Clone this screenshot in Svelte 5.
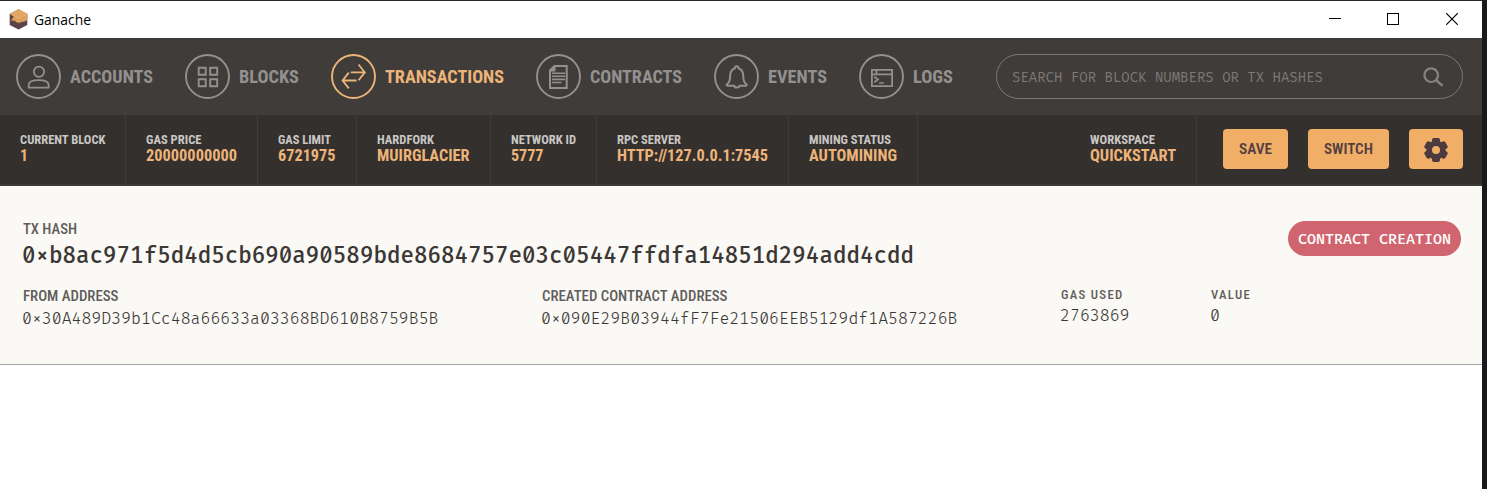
<script>
  const nav = [
    { name: 'ACCOUNTS', icon: 'user', w: 83 },
    { name: 'BLOCKS', icon: 'blocks', w: 60 },
    { name: 'TRANSACTIONS', icon: 'arrows', w: 119, active: true },
    { name: 'CONTRACTS', icon: 'doc', w: 92 },
    { name: 'EVENTS', icon: 'bell', w: 59 },
    { name: 'LOGS', icon: 'terminal', w: 40 }
  ];
  const stats = [
    { label: 'CURRENT BLOCK', lw: 85.5, value: '1', vw: 8, cell: 126 },
    { label: 'GAS PRICE', lw: 55.5, value: '20000000000', vw: 91, cell: 132 },
    { label: 'GAS LIMIT', lw: 53, value: '6721975', vw: 57.5, cell: 99 },
    { label: 'HARDFORK', lw: 57, value: 'MUIRGLACIER', vw: 92.5, cell: 134 },
    { label: 'NETWORK ID', lw: 65, value: '5777', vw: 32.5, cell: 106 },
    { label: 'RPC SERVER', lw: 64, value: 'HTTP://127.0.0.1:7545', vw: 151, cell: 192 },
    { label: 'MINING STATUS', lw: 82, value: 'AUTOMINING', vw: 88, cell: 129 }
  ];
</script>

{#snippet line(text, width, size, height, base, cls)}
  <svg class="line {cls}" {width} {height} font-size={size}>
    <text x="0" y={base} textLength={width} lengthAdjust="spacingAndGlyphs">{text}</text>
  </svg>
{/snippet}

{#snippet stat(s)}
  <div class="stat" style="width:{s.cell}px">
    {@render line(s.label, s.lw, 13, 14, 11, 'cond bold label')}
    {@render line(s.value, s.vw, 16.4, 18, 14, 'cond bold')}
  </div>
{/snippet}

<div class="screen">
  <div class="window">
    <header class="titlebar">
      <svg class="logo" width="19" height="21" viewBox="0 0 19 21">
        <path d="M9.5 0.3 18.3 5v11L9.5 20.5 .7 16V5z" fill="#5c4349" />
        <path d="M9.5 0.3 18.3 5v7.2l-2.1-.6-.9 1.4-1.6-.6-1.3 1.1-1.3-.5-1.3 1.4-1.3-1.3-1.4.4-1-2.1-1.3.8-1-.9-2.1.6z" fill="#dd9f5b" />
        <path d="M9.5 0.3 18.3 5 9.5 9.4 .7 5z" fill="#e3a762" />
        <path d="M2 5.5 9.5 9.4 17 5.5" fill="none" stroke="#ebbc83" stroke-width=".6" />
      </svg>
      {@render line('Ganache', 57, 15, 20, 15, 'title')}
      <div class="controls">
        <svg width="12" height="14" viewBox="0 0 12 14" fill="none" stroke="#000" shape-rendering="crispEdges">
          <path d="M0 6.5h12" />
        </svg>
        <svg width="12" height="14" viewBox="0 0 12 14" fill="none" stroke="#000" shape-rendering="crispEdges">
          <rect x=".5" y="1.5" width="11" height="11" />
        </svg>
        <svg width="12" height="14" viewBox="0 0 12 14" fill="none" stroke="#000" stroke-width="1.1">
          <path d="M.2 1.2l11.6 11.6M11.8 1.2l-11.6 11.6" />
        </svg>
      </div>
    </header>

    <nav class="nav">
      {#each nav as n}
        <div class="item" class:active={n.active}>
          <svg class="icon" width="45" height="45" viewBox="0 0 45 45" fill="none" stroke="currentColor" stroke-width="1.8">
            <circle cx="22.5" cy="22.5" r="21.5" stroke-width="1.9" />
            {#if n.icon === 'user'}
              <circle cx="23" cy="17.7" r="5.1" />
              <path d="M12.7 33.7v-2.5c0-3 3.5-5 10-5s10 2 10 5v2.5z" stroke-linejoin="round" />
            {:else if n.icon === 'blocks'}
              <path d="M13.7 13.7h7v7h-7zM25.2 13.7h7v7h-7zM13.7 25.2h7v7h-7zM25.2 25.2h7v7h-7z" stroke-width="1.9" />
            {:else if n.icon === 'arrows'}
              <path d="M19.8 18.4h13.8M27.6 10.5l6.2 7.9-6.2 7.9M25.6 26.5H11.6M17.8 18.6l-6.2 7.9 6.2 7.9" />
            {:else if n.icon === 'doc'}
              <path d="M18.4 12h12.3v22.1H14V16.4z" stroke-width="2" />
              <path d="M13.5 17l5.5-5.5V17z" fill="currentColor" stroke-width="1" />
              <path d="M16 19.2h13M16 22.3h13M16 25.4h13M16 28.5h9.5" stroke-width="1.6" />
            {:else if n.icon === 'bell'}
              <path d="M12.7 30.5c2.8-1.8 3.4-4.1 3.4-8 0-4.5 1.9-7.4 4.8-8.3 0-2.6 3.6-2.6 3.6 0 2.9.9 4.8 3.8 4.8 8.3 0 3.9.6 6.2 3.4 8 .2 1.2-.5 1.3-1.8 1.3h-5.2c-.7 2.4-4.9 2.4-5.4 0h-5.6c-1.4 0-2.1-.1-2-1.3z" stroke-width="2" stroke-linejoin="round" />
            {:else}
              <path d="M12.9 15.8h20.2v16.4h-20.2zM12.9 20.3h20.2M17.4 15.8v4.5" stroke-width="1.8" />
              <path d="M15.3 22.8l3.7 2.7-3.7 2.7M20 29h4.7" stroke-width="1.7" />
            {/if}
          </svg>
          {@render line(n.name, n.w, 18, 22, 17, 'cond bold')}
        </div>
      {/each}
      <div class="search">
        {@render line('SEARCH FOR BLOCK NUMBERS OR TX HASHES', 311, 14, 20, 15, 'mono')}
        <svg width="22" height="22" viewBox="0 0 22 22" fill="none" stroke="#858381" stroke-width="2.2">
          <circle cx="8.2" cy="9.2" r="6.8" />
          <path d="M13 14l6.6 5.8" stroke-width="2.4" />
        </svg>
      </div>
    </nav>

    <section class="status">
      {#each stats as s}
        {@render stat(s)}
      {/each}
      <div class="grow"></div>
      {@render stat({ label: 'WORKSPACE', lw: 65, value: 'QUICKSTART', vw: 86, cell: 127 })}
      <div class="buttons">
        <div class="btn save">{@render line('SAVE', 33, 15, 18, 14, 'cond semi')}</div>
        <div class="btn switch">{@render line('SWITCH', 49, 15, 18, 14, 'cond semi')}</div>
        <div class="btn gear">
          <svg width="24" height="26" viewBox="-12 -13 24 26" fill="#4c3a3f">
            <circle r="9.6" />
            {#each [0, 60, 120] as angle}
              <rect x="-4" y="-12" width="8" height="24" rx="2" transform="rotate({angle})" />
            {/each}
            <circle r="4" fill="#f1ae67" />
          </svg>
        </div>
      </div>
    </section>

    <main class="tx">
      <div class="top">
        <div class="hash">
          {@render line('TX HASH', 54, 15.5, 20, 16, 'cond med grey')}
          {@render line('0×b8ac971f5d4d5cb690a90589bde8684757e03c05447ffdfa14851d294add4cdd', 892, 22.5, 30, 25, 'mono heavy shift')}
        </div>
        <div class="badge">{@render line('CONTRACT CREATION', 153, 15, 20, 15, 'mono badgetext')}</div>
      </div>
      <div class="row">
        <div class="addr">
          {@render line('FROM ADDRESS', 95.5, 15.5, 20, 16, 'cond med grey')}
          {@render line('0×30A489D39b1Cc48a66633a03368BD610B8759B5B', 416.5, 16.5, 22, 19, 'mono light shift')}
        </div>
        <div class="addr">
          {@render line('CREATED CONTRACT ADDRESS', 185.5, 15.5, 20, 16, 'cond med grey')}
          {@render line('0×090E29B03944fF7Fe21506EEB5129df1A587226B', 416.5, 16.5, 22, 19, 'mono light shift')}
        </div>
        <div class="small used">
          {@render line('GAS USED', 62.5, 12.8, 18, 14, 'cond med grey spaced')}
          {@render line('2763869', 69.7, 16.5, 22, 18, 'mono light nudge')}
        </div>
        <div class="small">
          {@render line('VALUE', 40, 12.8, 18, 14, 'cond med grey spaced')}
          {@render line('0', 10, 16.5, 22, 18, 'mono light nudge')}
        </div>
      </div>
    </main>
  </div>
</div>

<style>
  :global(body) { margin: 0; background: #17191a; }
  .screen { width: 1487px; height: 489px; overflow: hidden; background: linear-gradient(90deg, #2a2729 0 1482px, #17191a 1482px); box-sizing: border-box; padding-top: 1px; }
  .window { width: 1482px; height: 488px; background: #fff; }
  .line { display: block; overflow: visible; flex: none; }
  .line text { fill: currentColor; }
  .cond { font-family: 'Roboto Condensed', Roboto, sans-serif; font-stretch: 75%; }
  .mono { font-family: 'Fira Code', 'Fira Mono', 'Liberation Mono', monospace; }
  .light { font-weight: 300; }
  .bold { font-weight: 700; }
  .semi { font-weight: 600; }
  .med { font-weight: 500; }
  .spaced { letter-spacing: 1.3px; }
  .shift { margin-left: -.6px; }
  .nudge { margin-left: -.2px; }
  .titlebar { height: 37px; display: flex; align-items: flex-start; box-sizing: border-box; padding: 8px 24px 0 9px; color: #000; }
  .title { font-family: 'Open Sans', sans-serif; margin: 1px 0 0 6px; }
  .controls { margin-left: auto; display: flex; gap: 46px; padding-top: 3px; }
  .controls svg:last-child { margin-left: 1px; }
  .nav { height: 77px; box-sizing: border-box; padding: 16px 19px 0 16px; background: #403c39; display: flex; gap: 32px; color: #939190; align-items: flex-start; }
  .item { display: flex; gap: 9px; align-items: center; height: 45px; }
  .active { color: #edb47a; }
  .icon { display: block; }
  .search { margin-left: auto; width: 467px; height: 45px; box-sizing: border-box; border: 1px solid #7b7977; border-radius: 23px; display: flex; align-items: center; justify-content: space-between; padding: 0 17px 0 14.5px; color: #7b7977; }
  .status { height: 71px; box-sizing: border-box; background: #34302d; border-bottom: 2px solid #3c3835; display: flex; color: #edb47a; }
  .stat { box-sizing: border-box; border-right: 1px solid #403c39; padding: 18px 0 0 20px; }
  .stat .label { color: #c9c7c5; }
  .grow { flex: 1; }
  .buttons { display: flex; gap: 20px; padding: 14px 19px 0 26px; }
  .btn { height: 40px; border-radius: 4px; background: #f1ae67; color: #543e40; display: flex; justify-content: center; align-items: center; box-sizing: border-box; }
  .save { width: 65px; }
  .switch { width: 81px; padding-right: 1px; }
  .gear { width: 54px; padding: 2px 0 0; }
  .tx { height: 179px; box-sizing: border-box; background: #faf9f5; border-bottom: 1px solid #a8a6a5; padding: 32px 21px 0 22.5px; color: #3b3735; }
  .grey { color: #605d5a; }
  .top { display: flex; justify-content: space-between; height: 67px; }
  .heavy { font-weight: 500; }
  .badge { width: 173px; height: 35px; margin-top: 3px; border-radius: 18px; background: #d1656f; color: #fff; display: flex; align-items: center; justify-content: center; }
  .badgetext { font-weight: 500; }
  .row { display: flex; }
  .addr { width: 519px; }
  .used { width: 150px; }
</style>
